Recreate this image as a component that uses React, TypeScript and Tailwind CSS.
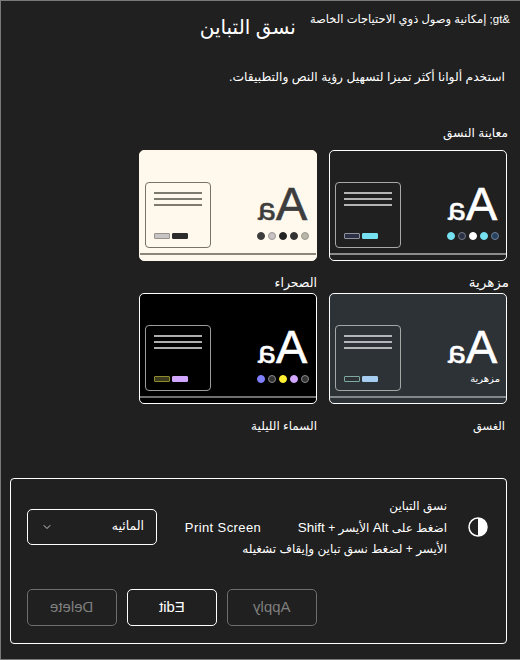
import React from 'react';
import { ChevronDown } from 'lucide-react';

const font = "font-['Liberation_Sans','DejaVu_Sans',sans-serif]";

interface Theme {
  id: string;
  name: string;
  bg: string;
  border: string;
  fg: string;
  frame: string;
  lines: string;
  rule: string;
  btnA: string;
  btnB: string;
  dots?: string[];
  nameClass: string;
}

const themes: Theme[] = [
  {
    id: 'bloom',
    name: 'مزهرية',
    bg: 'bg-[#202020]',
    border: 'border-white',
    fg: 'text-white',
    frame: 'border-[#a8a8a8]',
    lines: 'bg-[#b4b4b4]',
    rule: 'bg-[#8c8c8c]',
    btnA: 'bg-[#2b3045] border-[#8f93a0]',
    btnB: 'bg-[#75e0f0] border-[#75e0f0]',
    dots: ['bg-[#75e0f0] border-[#75e0f0]', 'bg-[#2b3045] border-[#777b88]', 'bg-white border-white', 'bg-[#75e0f0] border-[#75e0f0]', 'bg-[#26405e] border-[#6f8297]'],
    nameClass: '-mr-[2px] text-[13.5px]',
  },
  {
    id: 'desert',
    name: 'الصحراء',
    bg: 'bg-[#fff9ed]',
    border: 'border-[#fff9ed]',
    fg: 'text-[#3d3d3d]',
    frame: 'border-[#77736a]',
    lines: 'bg-[#7d7a70]',
    rule: 'bg-[#8a867c]',
    btnA: 'bg-[#c8c4c4] border-[#96928e]',
    btnB: 'bg-[#2c2c2c] border-[#2c2c2c]',
    dots: ['bg-[#3d3d3d] border-[#3d3d3d]', 'bg-[#c8c2c2] border-[#9a9696]', 'bg-[#232323] border-[#232323]', 'bg-[#333333] border-[#333333]', 'bg-[#b9b6a8] border-[#9c9a8e]'],
    nameClass: 'text-[12.5px]',
  },
  {
    id: 'dusk',
    name: 'الغسق',
    bg: 'bg-[#2d3236]',
    border: 'border-white',
    fg: 'text-white',
    frame: 'border-[#a4a9a8]',
    lines: 'bg-[#b4b7b8]',
    rule: 'bg-[#82878a]',
    btnA: 'bg-[#2d3236] border-[#7fa89e]',
    btnB: 'bg-[#a6cdf0] border-[#a6cdf0]',
    nameClass: 'pr-[2px] text-[11.5px]',
  },
  {
    id: 'night',
    name: 'السماء الليلية',
    bg: 'bg-black',
    border: 'border-white',
    fg: 'text-white',
    frame: 'border-[#9c9c9c]',
    lines: 'bg-[#adadad]',
    rule: 'bg-[#6f6f6f]',
    btnA: 'bg-[#3a3a1e] border-[#8f8a2a]',
    btnB: 'bg-[#d0a6ff] border-[#d0a6ff]',
    dots: ['bg-[#8080ff] border-[#8080ff]', 'bg-[#333333] border-[#8a8a8a]', 'bg-[#ffee32] border-[#ffee32]', 'bg-[#d0a6ff] border-[#d0a6ff]', 'bg-[#333333] border-[#8a8a8a]'],
    nameClass: 'text-[12px]',
  },
];

const ThemeCard: React.FC<{ theme: Theme }> = ({ theme }) => (
  <div>
    <div className={`h-[111px] rounded-[5px] border ${theme.bg} ${theme.border} flex flex-col overflow-hidden`}>
      <div className="flex justify-between pt-[31px] pl-[5px] pr-[6px]">
        <div className="w-[54px] flex flex-col items-center">
          <div dir="ltr" className={`mt-[2px] h-[40px] -scale-x-100 leading-[40px] whitespace-nowrap [-webkit-text-stroke:0.6px_currentColor] ${theme.fg}`}>
            <span className="text-[47px]">A</span>
            <span className="text-[32px]">a</span>
          </div>
          {theme.dots ? (
            <div dir="ltr" className="mt-[8px] flex gap-[3px]">
              {theme.dots.map((dot, i) => (
                <span key={i} className={`w-[8px] h-[8px] rounded-full border ${dot}`} />
              ))}
            </div>
          ) : (
            <div className="mt-[6px] self-start text-[10px] leading-[12px] text-white">مزهرية</div>
          )}
        </div>
        <div className={`w-[66px] h-[66px] rounded-[4px] border-[1.5px] ${theme.frame} px-[8px] pt-[9px] pb-[8px] flex flex-col`}>
          <div className={`h-[2px] ${theme.lines}`} />
          <div className={`h-[2px] mt-[4px] ${theme.lines}`} />
          <div className={`h-[2px] mt-[4px] ${theme.lines}`} />
          <div dir="ltr" className="mt-auto flex gap-[2px]">
            <span className={`w-[16px] h-[6px] rounded-[1px] border ${theme.btnA}`} />
            <span className={`w-[16px] h-[6px] rounded-[1px] border ${theme.btnB}`} />
          </div>
        </div>
      </div>
      <div className={`h-[2px] mt-[5px] ${theme.rule}`} />
    </div>
    <div className={`mt-[12px] h-[20px] leading-[20px] text-white ${theme.nameClass}`}>{theme.name}</div>
  </div>
);

export default function App() {
  return (
    <div dir="rtl" className={`w-[520px] h-[660px] bg-[#202020] border-t border-l border-b border-[#7a7a7a] text-white overflow-hidden ${font}`}>
      <div className="flex pt-[9px] pr-[10px]">
        <div className="text-[11.5px] leading-[18px]">{'&gt; إمكانية وصول ذوي الاحتياجات الخاصة'}</div>
        <h1 className="mr-[14px] mt-[1px] text-[20px] leading-[32px] font-normal">نسق التباين</h1>
      </div>

      <p className="mt-[24px] pr-[15px] text-[12.3px] leading-[20px]">استخدم ألوانا أكثر تميزا لتسهيل رؤية النص والتطبيقات.</p>
      <div className="mt-[36px] pr-[12px] text-[12.2px] leading-[20px]">معاينة النسق</div>

      <div className="mt-[7px] mr-[13px] grid grid-cols-[178px_178px] gap-x-[12px]">
        {themes.map((theme) => (
          <ThemeCard key={theme.id} theme={theme} />
        ))}
      </div>

      <div className="mt-[42px] mr-[13px] ml-[9px] rounded-[4px] border border-white pt-[16px] pb-[17px] pl-[16px]">
        <div className="flex items-center h-[63px]">
          <svg className="mr-[18px] w-[20px] h-[20px] shrink-0" viewBox="0 0 20 20" fill="none">
            <circle cx="10" cy="10" r="9" stroke="white" strokeWidth="1.5" />
            <path d="M10 1a9 9 0 0 1 0 18z" fill="white" />
          </svg>
          <div className="mr-[21px] pt-[2px] w-[185px] shrink-0 whitespace-nowrap text-[12px] leading-[21px]">
            <div>نسق التباين</div>
            <div>اضغط على <span className="text-[13.5px]">Alt</span> الأيسر + <span className="text-[13.5px]">Shift</span></div>
            <div>الأيسر + لضغط نسق تباين وإيقاف تشغيله</div>
          </div>
          <div dir="ltr" className="w-[78px] pt-[2px] shrink-0 text-[13px] tracking-[0.4px] leading-[21px] text-center">Print Screen</div>
          <div className="mr-[27px] w-[130px] h-[36px] rounded-[5px] border border-white flex items-center justify-between pr-[12px] pl-[13px] text-[12.5px]">
            <span>المائيه</span>
            <ChevronDown size={12} strokeWidth={1.5} />
          </div>
        </div>
        <div className="mt-[31px] flex justify-end gap-[10px]">
          {[
            { label: 'Apply', enabled: false },
            { label: 'Edit', enabled: true },
            { label: 'Delete', enabled: false },
          ].map((btn) => (
            <div
              key={btn.label}
              className={`w-[90px] h-[37px] rounded-[5px] border flex items-center justify-center text-[15px] ${btn.enabled ? 'border-white text-white' : 'border-[#6e6e6e] text-[#7f7f7f]'}`}
            >
              <span dir="ltr" className="-scale-x-100">{btn.label}</span>
            </div>
          ))}
        </div>
      </div>
    </div>
  );
}
